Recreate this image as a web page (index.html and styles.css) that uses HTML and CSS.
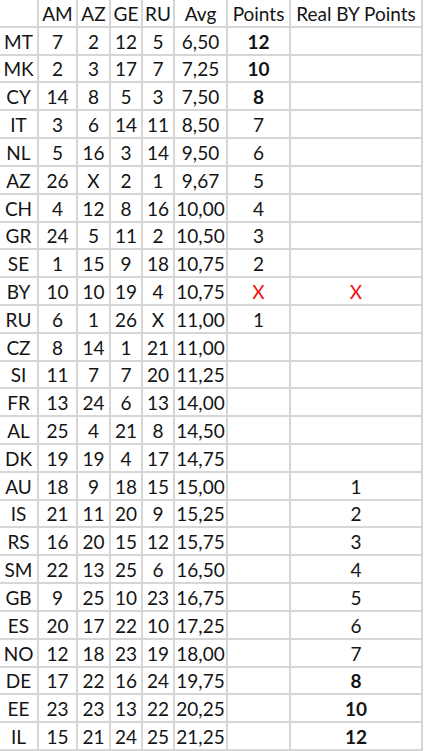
FILE: index.html
```html
<!DOCTYPE html>
<html lang="en">
<head>
<meta charset="utf-8">
<title>Points table</title>
<link rel="stylesheet" href="styles.css">
</head>
<body>
<div class="sheet">
<div class="c"></div><div class="c">AM</div><div class="c">AZ</div><div class="c">GE</div><div class="c">RU</div><div class="c">Avg</div><div class="c">Points</div><div class="c">Real BY Points</div>
<div class="c">MT</div><div class="c">7</div><div class="c">2</div><div class="c">12</div><div class="c">5</div><div class="c">6,50</div><div class="c b">12</div><div class="c"></div>
<div class="c">MK</div><div class="c">2</div><div class="c">3</div><div class="c">17</div><div class="c">7</div><div class="c">7,25</div><div class="c b">10</div><div class="c"></div>
<div class="c">CY</div><div class="c">14</div><div class="c">8</div><div class="c">5</div><div class="c">3</div><div class="c">7,50</div><div class="c b">8</div><div class="c"></div>
<div class="c">IT</div><div class="c">3</div><div class="c">6</div><div class="c">14</div><div class="c">11</div><div class="c">8,50</div><div class="c">7</div><div class="c"></div>
<div class="c">NL</div><div class="c">5</div><div class="c">16</div><div class="c">3</div><div class="c">14</div><div class="c">9,50</div><div class="c">6</div><div class="c"></div>
<div class="c">AZ</div><div class="c">26</div><div class="c">X</div><div class="c">2</div><div class="c">1</div><div class="c">9,67</div><div class="c">5</div><div class="c"></div>
<div class="c">CH</div><div class="c">4</div><div class="c">12</div><div class="c">8</div><div class="c">16</div><div class="c">10,00</div><div class="c">4</div><div class="c"></div>
<div class="c">GR</div><div class="c">24</div><div class="c">5</div><div class="c">11</div><div class="c">2</div><div class="c">10,50</div><div class="c">3</div><div class="c"></div>
<div class="c">SE</div><div class="c">1</div><div class="c">15</div><div class="c">9</div><div class="c">18</div><div class="c">10,75</div><div class="c">2</div><div class="c"></div>
<div class="c">BY</div><div class="c">10</div><div class="c">10</div><div class="c">19</div><div class="c">4</div><div class="c">10,75</div><div class="c r">X</div><div class="c r">X</div>
<div class="c">RU</div><div class="c">6</div><div class="c">1</div><div class="c">26</div><div class="c">X</div><div class="c">11,00</div><div class="c">1</div><div class="c"></div>
<div class="c">CZ</div><div class="c">8</div><div class="c">14</div><div class="c">1</div><div class="c">21</div><div class="c">11,00</div><div class="c"></div><div class="c"></div>
<div class="c">SI</div><div class="c">11</div><div class="c">7</div><div class="c">7</div><div class="c">20</div><div class="c">11,25</div><div class="c"></div><div class="c"></div>
<div class="c">FR</div><div class="c">13</div><div class="c">24</div><div class="c">6</div><div class="c">13</div><div class="c">14,00</div><div class="c"></div><div class="c"></div>
<div class="c">AL</div><div class="c">25</div><div class="c">4</div><div class="c">21</div><div class="c">8</div><div class="c">14,50</div><div class="c"></div><div class="c"></div>
<div class="c">DK</div><div class="c">19</div><div class="c">19</div><div class="c">4</div><div class="c">17</div><div class="c">14,75</div><div class="c"></div><div class="c"></div>
<div class="c">AU</div><div class="c">18</div><div class="c">9</div><div class="c">18</div><div class="c">15</div><div class="c">15,00</div><div class="c"></div><div class="c">1</div>
<div class="c">IS</div><div class="c">21</div><div class="c">11</div><div class="c">20</div><div class="c">9</div><div class="c">15,25</div><div class="c"></div><div class="c">2</div>
<div class="c">RS</div><div class="c">16</div><div class="c">20</div><div class="c">15</div><div class="c">12</div><div class="c">15,75</div><div class="c"></div><div class="c">3</div>
<div class="c">SM</div><div class="c">22</div><div class="c">13</div><div class="c">25</div><div class="c">6</div><div class="c">16,50</div><div class="c"></div><div class="c">4</div>
<div class="c">GB</div><div class="c">9</div><div class="c">25</div><div class="c">10</div><div class="c">23</div><div class="c">16,75</div><div class="c"></div><div class="c">5</div>
<div class="c">ES</div><div class="c">20</div><div class="c">17</div><div class="c">22</div><div class="c">10</div><div class="c">17,25</div><div class="c"></div><div class="c">6</div>
<div class="c">NO</div><div class="c">12</div><div class="c">18</div><div class="c">23</div><div class="c">19</div><div class="c">18,00</div><div class="c"></div><div class="c">7</div>
<div class="c">DE</div><div class="c">17</div><div class="c">22</div><div class="c">16</div><div class="c">24</div><div class="c">19,75</div><div class="c"></div><div class="c b">8</div>
<div class="c">EE</div><div class="c">23</div><div class="c">23</div><div class="c">13</div><div class="c">22</div><div class="c">20,25</div><div class="c"></div><div class="c b">10</div>
<div class="c">IL</div><div class="c">15</div><div class="c">21</div><div class="c">24</div><div class="c">25</div><div class="c">21,25</div><div class="c"></div><div class="c b">12</div>
</div>
</body>
</html>
```

FILE: styles.css
```css
html, body {
  margin: 0;
  padding: 0;
  background: #ffffff;
}

.sheet {
  width: 423px;
  height: 751px;
  box-sizing: border-box;
  display: grid;
  grid-template-columns: 37px 37px 31px 30px 30px 51px 61px 130px;
  grid-template-rows: repeat(27, 1fr);
  gap: 2px;
  background: #d6d6d6;
  border-right: 2px solid #d6d6d6;
  border-bottom: 2px solid #d6d6d6;
  font-family: Lato, "Open Sans", sans-serif;
  font-size: 19px;
  color: #141414;
}

.c {
  background: #ffffff;
  display: flex;
  align-items: flex-end;
  justify-content: center;
  line-height: 20px;
  padding-bottom: 2px;
  white-space: nowrap;
  overflow: visible;
}

.b {
  font-weight: 700;
}

.r {
  color: #f01010;
}
```
